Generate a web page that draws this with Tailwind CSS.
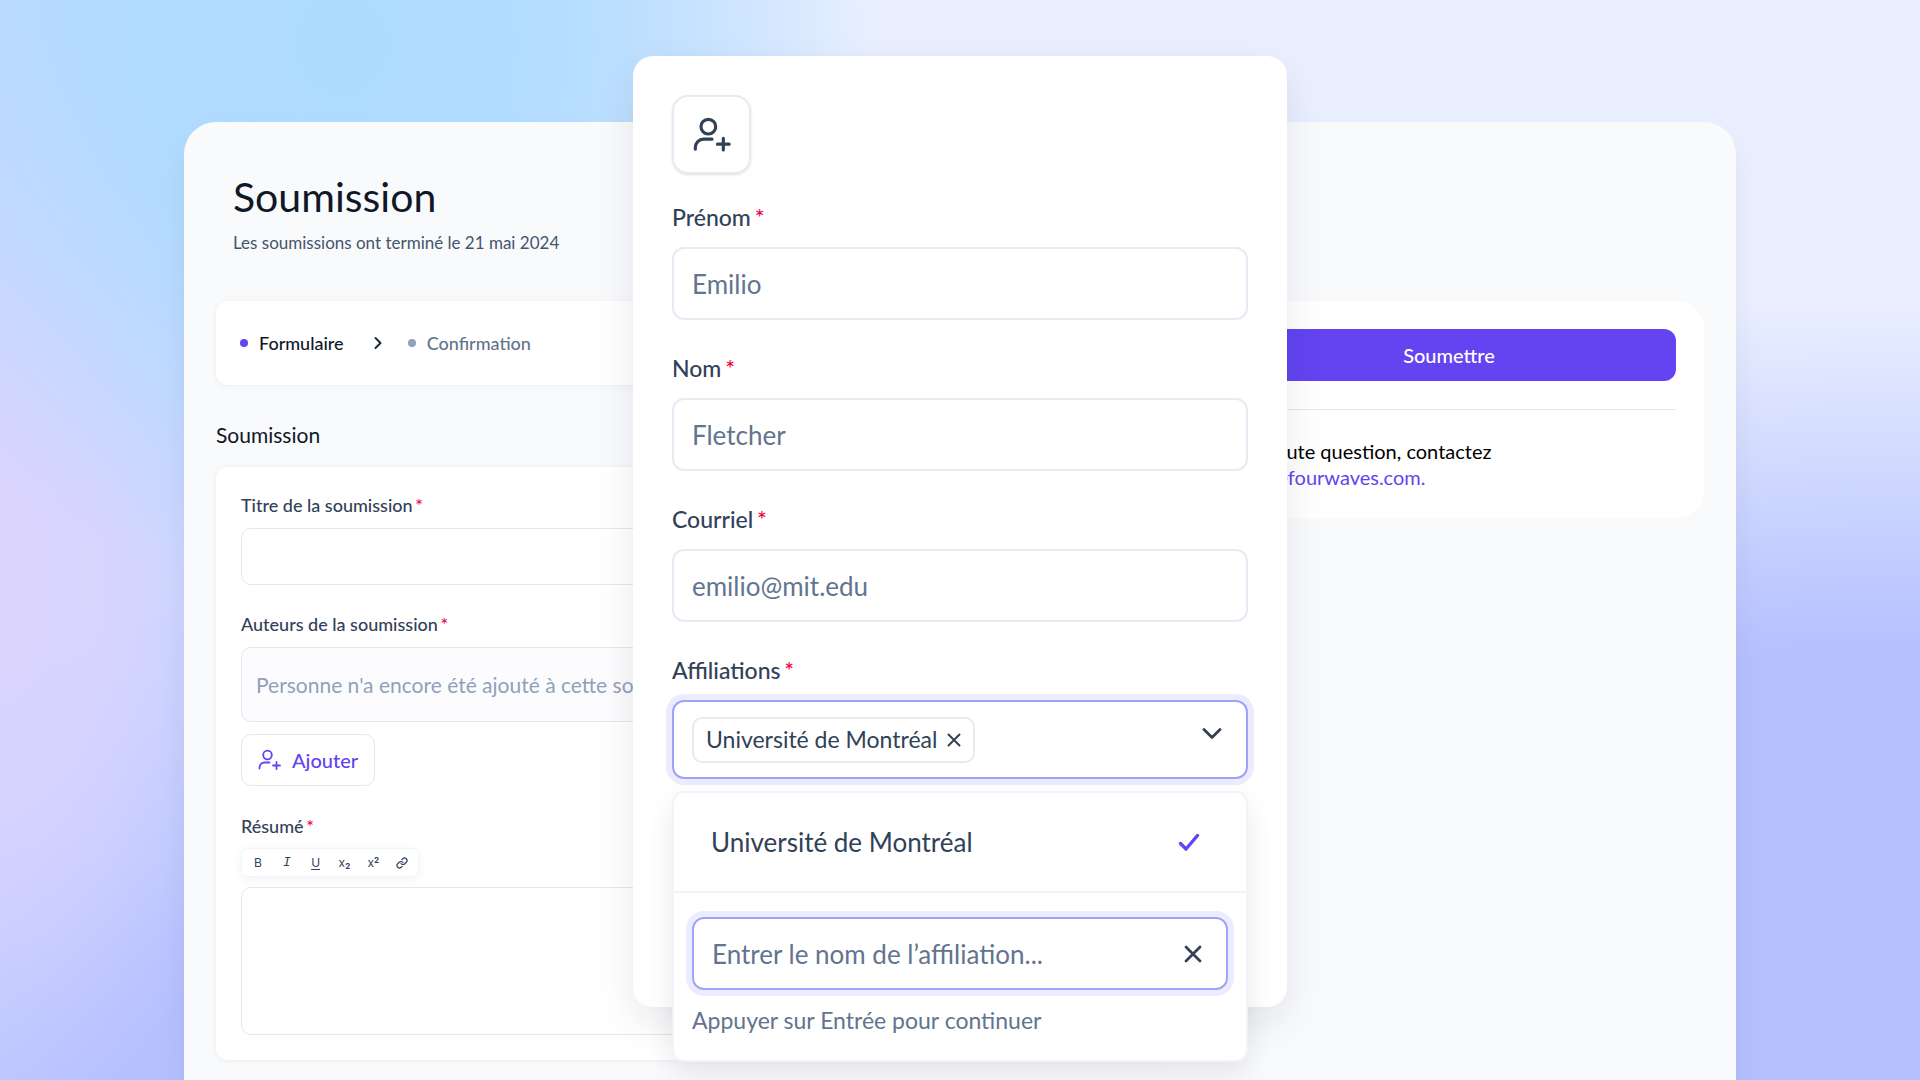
<!DOCTYPE html>
<html lang="fr">
<head>
  <meta charset="UTF-8" />
  <meta name="viewport" content="width=device-width, initial-scale=1.0"/>
  <title>Soumission</title>
  <script src="https://cdn.jsdelivr.net/npm/@tailwindcss/browser@4"></script>
</head>
<body class="relative h-screen overflow-hidden bg-[#e9efff] font-['Lato',sans-serif] text-slate-700">

  <!-- background colours -->
  <div class="absolute inset-0 -z-10 bg-[radial-gradient(ellipse_28%_52%_at_18%_4%,#addcff_0%,#addcffcc_40%,#addcff00_100%),radial-gradient(ellipse_14%_52%_at_0%_54%,#dcd4ff_0%,#dcd4ffcc_40%,#dcd4ff00_100%),radial-gradient(ellipse_36%_56%_at_18%_108%,#b2bcff_0%,#b2bcffcc_45%,#b2bcff00_100%),radial-gradient(ellipse_60%_64%_at_98%_92%,#b5c0ff_0%,#b5c0ff_50%,#b5c0ff00_100%),linear-gradient(90deg,#c4d8ff_0%,#c4d8ff_18%,#c4d8ff00_44%)]"></div>

  <main class="mx-auto flex h-full w-full max-w-[1600px] flex-col px-6 pt-[122px]">
    <div class="flex flex-1 flex-col rounded-t-[32px] bg-[#f9fafc] px-8 pt-[51px] shadow-[0_16px_32px_rgba(15,23,42,0.06)]">
      <header class="px-[17px]">
        <h1 class="text-[41px] leading-12 text-gray-900">Soumission</h1>
        <p class="mt-[10px] text-[17px] leading-6 text-slate-600">Les soumissions ont terminé le 21 mai 2024</p>
      </header>

      <div class="mt-[46px] flex items-start gap-6">
        <div class="min-w-0 flex-1">
          <nav class="flex h-[84px] items-center rounded-xl bg-white px-6 text-[18px] font-medium shadow-[0_1px_6px_rgba(15,23,42,0.06)]" aria-label="Étapes">
            <span class="size-2 rounded-full bg-[#6344f0]"></span>
            <a href="#formulaire" class="ml-[11px] text-gray-900">Formulaire</a>
            <svg class="ml-[30px] h-[14px] w-2" viewBox="0 0 8 14" fill="none" stroke="#1e293b" stroke-width="2" stroke-linecap="round" stroke-linejoin="round"><path d="M1.5 2l5 5-5 5"/></svg>
            <span class="ml-[26px] size-2 rounded-full bg-slate-400"></span>
            <a href="#confirmation" class="ml-[11px] text-slate-500">Confirmation</a>
          </nav>

          <h2 class="mt-[34px] text-[21px] leading-8 text-gray-900">Soumission</h2>

          <form id="formulaire" class="mt-4 rounded-xl bg-white px-[25px] pt-[22px] pb-[25px] shadow-[0_1px_6px_rgba(15,23,42,0.06)]">
            <label for="titre" class="block text-[18px] leading-8 font-medium">Titre de la soumission <span class="-ml-0.5 text-rose-600">*</span></label>
            <input id="titre" type="text" class="mt-[7px] block h-[57px] w-full rounded-[10px] border border-slate-200 px-4" />

            <h3 class="mt-[23px] text-[18px] leading-8 font-medium">Auteurs de la soumission <span class="-ml-0.5 text-rose-600">*</span></h3>
            <p class="mt-[7px] flex h-[75px] items-center overflow-hidden rounded-[10px] border border-slate-200 bg-[#fcfcfe] px-[14px] text-[21px] whitespace-nowrap text-slate-400">Personne n'a encore été ajouté à cette soumission</p>
            <button type="button" class="mt-3 flex h-[52px] items-center gap-2.5 rounded-[10px] border border-slate-200 px-4 text-[20px] font-medium text-[#6344f0]">
              <svg class="size-6" viewBox="0 0 24 24" fill="none" stroke="currentColor" stroke-width="1.8" stroke-linecap="round" stroke-linejoin="round"><circle cx="9.500" cy="7" r="4.300"/><path d="M1.500 20.500v-1a5 5 0 0 1 5-5h5"/><path d="M18.500 14v7M15 17.500h7"/></svg>
              Ajouter
            </button>

            <label for="resume" class="mt-6 block text-[18px] leading-8 font-medium">Résumé <span class="-ml-0.5 text-rose-600">*</span></label>
            <div class="mt-[6px] flex h-[29px] w-[178px] items-center justify-between rounded-md border border-slate-100 px-2 font-['Inter',sans-serif] text-[12px] leading-4 shadow-[0_2px_8px_rgba(15,23,42,0.06)]" role="toolbar" aria-label="Mise en forme">
              <button type="button" class="w-4">B</button>
              <button type="button" class="w-4 font-['Liberation_Mono',monospace] text-[13px] italic">I</button>
              <button type="button" class="w-4 underline underline-offset-2">U</button>
              <button type="button" class="flex w-4 items-center justify-center">x<span class="mt-1.5 text-[8px] font-bold">2</span></button>
              <button type="button" class="flex w-4 items-center justify-center">x<span class="mb-1.5 text-[8px] font-bold">2</span></button>
              <button type="button" class="flex w-4 justify-center" aria-label="Lien">
                <svg class="size-3" viewBox="0 0 24 24" fill="none" stroke="currentColor" stroke-width="2.400" stroke-linecap="round" stroke-linejoin="round"><path d="M10 13a5 5 0 0 0 7.540.54l3-3a5 5 0 0 0-7.070-7.070l-1.720 1.710"/><path d="M14 11a5 5 0 0 0-7.540-.54l-3 3a5 5 0 0 0 7.070 7.070l1.710-1.710"/></svg>
              </button>
            </div>
            <textarea id="resume" class="mt-[10px] block h-[148px] w-full resize-none rounded-[10px] border border-slate-200 p-4"></textarea>
          </form>
        </div>

        <aside class="w-[510px] rounded-[28px] bg-white p-7">
          <button type="button" class="h-[52px] w-full rounded-xl bg-[#6344f0] text-[20px] font-medium text-white">Soumettre</button>
          <hr class="mt-7 border-slate-200" />
          <p class="mt-7 text-[20px] leading-[26px] text-black">Pour toute question, contactez<br /><a href="mailto:event@fourwaves.com" class="text-[#6344f0]">event@fourwaves.com.</a></p>
        </aside>
      </div>
    </div>
  </main>

  <!-- add author dialog -->
  <div class="absolute inset-x-0 top-14 flex justify-center">
    <form role="dialog" aria-label="Ajouter un auteur" class="w-full max-w-[654px] rounded-[20px] bg-white px-[39px] pt-[39px] pb-[228px] text-[23px] shadow-[0_16px_40px_rgba(15,23,42,0.09)]">
      <div class="flex size-[79px] items-center justify-center rounded-2xl border-2 border-[#e6eaf2] shadow-sm">
        <svg class="size-10" viewBox="0 0 24 24" fill="none" stroke="#334155" stroke-width="1.900" stroke-linecap="round" stroke-linejoin="round"><circle cx="9.800" cy="7" r="4.400"/><path d="M2 20.500v-1a5 5 0 0 1 5-5h5"/><path d="M18.800 14v7M15.300 17.500h7"/></svg>
      </div>

      <label for="prenom" class="mt-[27px] block leading-8 font-medium">Prénom <span class="-ml-0.5 text-rose-600">*</span></label>
      <input id="prenom" type="text" placeholder="Emilio" class="mt-[14px] block h-[73px] w-full rounded-xl border-2 border-[#e6eaf2] px-[18px] text-[26px] placeholder:text-slate-500" />

      <label for="nom" class="mt-8 block leading-8 font-medium">Nom <span class="-ml-0.5 text-rose-600">*</span></label>
      <input id="nom" type="text" placeholder="Fletcher" class="mt-[14px] block h-[73px] w-full rounded-xl border-2 border-[#e6eaf2] px-[18px] text-[26px] placeholder:text-slate-500" />

      <label for="courriel" class="mt-8 block leading-8 font-medium">Courriel <span class="-ml-0.5 text-rose-600">*</span></label>
      <input id="courriel" type="email" placeholder="emilio@mit.edu" class="mt-[14px] block h-[73px] w-full rounded-xl border-2 border-[#e6eaf2] px-[18px] text-[26px] placeholder:text-slate-500" />

      <label for="affiliations" class="mt-8 block leading-8 font-medium">Affiliations <span class="-ml-0.5 text-rose-600">*</span></label>
      <div class="relative mt-[14px]">
        <div class="flex h-[79px] items-center justify-between rounded-xl border-2 border-[#9fa1fb] bg-white pr-6 pl-[18px] ring-6 ring-[#ebedff]">
          <span class="flex h-[46px] items-center gap-2.5 rounded-[10px] border-2 border-[#e6eaf2] px-3">
            Université de Montréal
            <button type="button" aria-label="Retirer">
              <svg class="size-[14px]" viewBox="0 0 14 14" fill="none" stroke="#334155" stroke-width="2" stroke-linecap="round"><path d="M1.500 1.500l11 11M12.500 1.500l-11 11"/></svg>
            </button>
          </span>
          <button id="affiliations" type="button" class="mb-3" aria-haspopup="listbox" aria-expanded="true">
            <svg class="h-3 w-5" viewBox="0 0 20 12" fill="none" stroke="#334155" stroke-width="2.800" stroke-linecap="round" stroke-linejoin="round"><path d="M2 1.500l8 8 8-8"/></svg>
          </button>
        </div>

        <!-- open list -->
        <div class="absolute inset-x-0 top-full mt-3 rounded-xl border-2 border-[#f3f4f9] bg-white shadow-[0_12px_28px_rgba(15,23,42,0.09)]">
          <ul role="listbox" class="border-b-2 border-[#f3f4f9]">
            <li role="option" aria-selected="true" class="flex h-[98px] items-center justify-between pr-[46px] pl-[37px] text-[26px]">
              Université de Montréal
              <svg class="h-[18px] w-[22px]" viewBox="0 0 22 18" fill="none" stroke="#6344f0" stroke-width="3.400" stroke-linecap="round" stroke-linejoin="round"><path d="M2.500 10.500l5.500 5.500L19.500 2.500"/></svg>
            </li>
          </ul>
          <div class="px-[18px] py-6">
            <div class="flex h-[73px] items-center rounded-xl border-2 border-[#9fa1fb] pr-6 pl-[18px] ring-6 ring-[#ebedff]">
              <input type="text" aria-label="Nom de l’affiliation" placeholder="Entrer le nom de l’affiliation..." class="h-full min-w-0 flex-1 text-[26px] outline-none placeholder:text-slate-500" />
              <button type="button" aria-label="Effacer">
                <svg class="size-[18px]" viewBox="0 0 18 18" fill="none" stroke="#334155" stroke-width="2.800" stroke-linecap="round"><path d="M2 2l14 14M16 2L2 16"/></svg>
              </button>
            </div>
            <p class="mt-[14px] leading-8 text-slate-500">Appuyer sur Entrée pour continuer</p>
          </div>
        </div>
      </div>
    </form>
  </div>
</body>
</html>
